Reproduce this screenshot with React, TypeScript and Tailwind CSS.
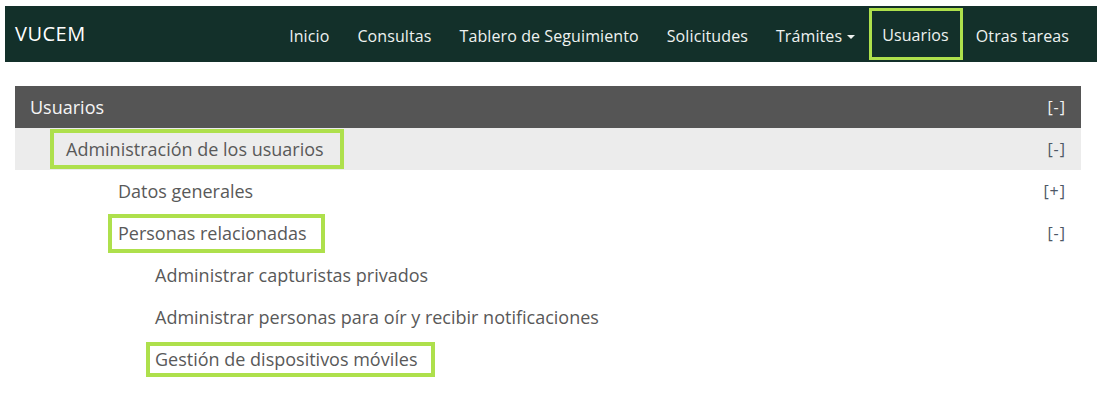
import React from "react";

const navItems = ["Inicio", "Consultas", "Tablero de Seguimiento", "Solicitudes"];

function Toggle({ sign, light }: { sign: string; light?: boolean }) {
  return (
    <span className={`text-[16px] tracking-[1px] ${light ? "text-[#f2f2f2]" : "text-[#4d5866]"}`}>[{sign}]</span>
  );
}

export default function App() {
  return (
    <div className="min-h-screen bg-white pt-[6px] font-['Open_Sans',sans-serif]">
      {/* Navbar */}
      <nav className="mx-[5px] h-[56px] bg-[#13302a] flex items-center pl-[10px] pr-[14px]">
        <div className="text-[20px] text-white tracking-[0.5px]">VUCEM</div>
        <ul className="ml-auto flex items-stretch h-full text-[16px] tracking-[0.1px] text-[#eef2f0]">
          {navItems.map((n) => (
            <li key={n} className="px-[14px] flex items-center pt-[3px]">
              {n}
            </li>
          ))}
          <li className="px-[14px] flex items-center pt-[3px]">
            Trámites
            <span className="ml-[5px] mt-[2px] border-x-[4px] border-x-transparent border-t-[4px] border-t-[#eef2f0]" />
          </li>
          <li className="my-[2px] pl-[10px] pr-[11px] flex items-center pt-[1px] border-[3px] border-[#aee04c]">
            Usuarios
          </li>
          <li className="pl-[13px] pr-[14px] flex items-center pt-[3px]">Otras tareas</li>
        </ul>
      </nav>

      {/* Tree panel */}
      <div className="mt-[24px] ml-[15px] w-[1066px] text-[18px] text-[#595959]">
        <div className="h-[42px] bg-[#555555] flex items-center justify-between pl-[15px] pr-[15px] text-[#f5f5f5]">
          <span>Usuarios</span>
          <Toggle sign="-" light />
        </div>

        <div className="h-[42px] bg-[#ececec] flex items-center justify-between pl-[35px] pr-[15px]">
          <span className="h-[40px] flex items-center pl-[12px] pr-[16px] border-[4px] border-[#aee04c]">
            Administración de los usuarios
          </span>
          <Toggle sign="-" />
        </div>

        <div className="h-[42px] flex items-center justify-between pl-[103px] pr-[15px]">
          <span>Datos generales</span>
          <Toggle sign="+" />
        </div>

        <div className="h-[42px] flex items-center justify-between pl-[93px] pr-[15px]">
          <span className="h-[39px] flex items-center pl-[6px] pr-[14px] border-[4px] border-[#aee04c]">
            Personas relacionadas
          </span>
          <Toggle sign="-" />
        </div>

        <div className="h-[42px] flex items-center pl-[140px]">
          <span>Administrar capturistas privados</span>
        </div>

        <div className="h-[42px] flex items-center pl-[140px]">
          <span>Administrar personas para oír y recibir notificaciones</span>
        </div>

        <div className="h-[42px] flex items-center pl-[131px]">
          <span className="h-[35px] flex items-center pl-[5px] pr-[14px] border-[4px] border-[#aee04c]">
            Gestión de dispositivos móviles
          </span>
        </div>
      </div>
    </div>
  );
}
